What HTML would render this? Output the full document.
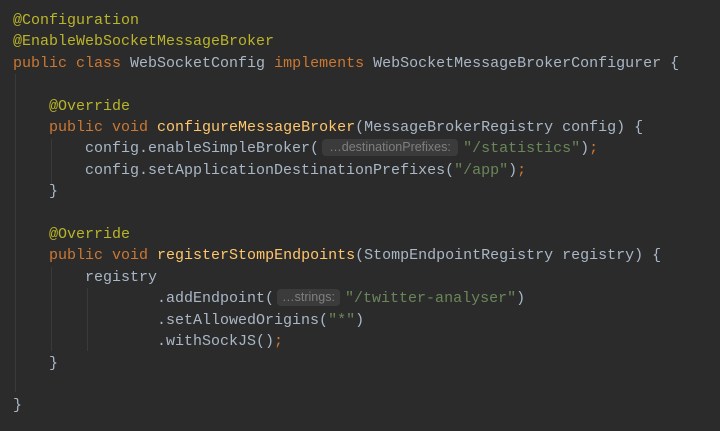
<!DOCTYPE html>
<html><head><meta charset="utf-8">
<style>
html,body{margin:0;padding:0;background:#2b2b2b;width:720px;height:431px;overflow:hidden}
.code{position:absolute;left:13px;top:10px;font-family:"Liberation Mono",monospace;font-size:15px;line-height:21.4px;color:#a9b7c6;white-space:pre}
.a{color:#bbb529}.k{color:#cc7832}.m{color:#ffc66d}.s{color:#6a8759}
.h{display:inline-block;background:#3b3b3b;color:#7f7f7f;font-family:"Liberation Sans",sans-serif;font-size:12.5px;line-height:17px;border-radius:4px;text-align:center;vertical-align:1px;margin:0 5px 0 3px}
.g{position:absolute;width:1px;background:#3a3a3a}
</style></head><body>
<div class="g" style="left:15px;top:74px;height:318px"></div>
<div class="g" style="left:51px;top:139px;height:45px"></div>
<div class="g" style="left:51px;top:267px;height:84px"></div>
<div class="g" style="left:87px;top:288px;height:63px"></div>
<div class="code"><span class="a">@Configuration</span>
<span class="a">@EnableWebSocketMessageBroker</span>
<span class="k">public class </span>WebSocketConfig <span class="k">implements </span>WebSocketMessageBrokerConfigurer {

    <span class="a">@Override</span>
    <span class="k">public void </span><span class="m">configureMessageBroker</span>(MessageBrokerRegistry config) {
        config.enableSimpleBroker(<span class="h" style="width:136px">…destinationPrefixes:</span><span class="s">"/statistics"</span>)<span class="k">;</span>
        config.setApplicationDestinationPrefixes(<span class="s">"/app"</span>)<span class="k">;</span>
    }

    <span class="a">@Override</span>
    <span class="k">public void </span><span class="m">registerStompEndpoints</span>(StompEndpointRegistry registry) {
        registry
                .addEndpoint(<span class="h" style="width:63px">…strings:</span><span class="s">"/twitter-analyser"</span>)
                .setAllowedOrigins(<span class="s">"*"</span>)
                .withSockJS()<span class="k">;</span>
    }

}</div>
</body></html>
